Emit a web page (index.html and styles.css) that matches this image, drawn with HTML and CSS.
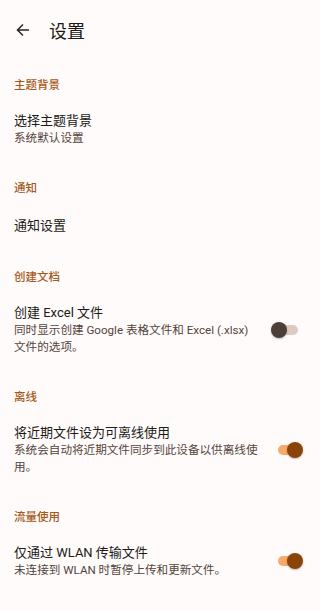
FILE: index.html
```html
<!DOCTYPE html>
<html lang="zh">
<head>
    <meta charset="UTF-8">
    <meta name="viewport" content="width=device-width, initial-scale=1.0">
    <title>设置</title>
    <link rel="stylesheet" href="styles.css">
</head>
<body>
    <div class="top-bar">
        <svg class="back-icon" width="16" height="16" viewBox="0 0 16 16">
            <path d="M14 8H2.5M8 2.5L2.5 8L8 13.5" fill="none" stroke="#2a2220" stroke-width="1.5"/>
        </svg>
        <span class="page-title">设置</span>
    </div>

    <div class="section-label">主题背景</div>
    <div class="item">
        <div class="item-text">
            <div class="item-title">选择主题背景</div>
            <div class="item-sub">系统默认设置</div>
        </div>
    </div>

    <div class="section-label">通知</div>
    <div class="item single">
        <div class="item-text">
            <div class="item-title">通知设置</div>
        </div>
    </div>

    <div class="section-label">创建文档</div>
    <div class="item">
        <div class="item-text">
            <div class="item-title">创建 Excel 文件</div>
            <div class="item-sub">同时显示创建 Google 表格文件和 Excel (.xlsx) 文件的选项。</div>
        </div>
        <div class="switch"><div class="switch-track"></div><div class="switch-thumb"></div></div>
    </div>

    <div class="section-label">离线</div>
    <div class="item">
        <div class="item-text">
            <div class="item-title">将近期文件设为可离线使用</div>
            <div class="item-sub">系统会自动将近期文件同步到此设备以供离线使用。</div>
        </div>
        <div class="switch on"><div class="switch-track"></div><div class="switch-thumb"></div></div>
    </div>

    <div class="section-label">流量使用</div>
    <div class="item">
        <div class="item-text">
            <div class="item-title">仅通过 WLAN 传输文件</div>
            <div class="item-sub">未连接到 WLAN 时暂停上传和更新文件。</div>
        </div>
        <div class="switch on"><div class="switch-track"></div><div class="switch-thumb"></div></div>
    </div>
</body>
</html>
```

FILE: styles.css
```css
body {
    margin: 0;
    background-color: #fffbfa;
    font-family: Roboto, "Noto Sans CJK SC", sans-serif;
    color: #201a17;
}
.top-bar {
    height: 61px;
    display: flex;
    align-items: center;
    padding-left: 15px;
    padding-bottom: 2px;
    box-sizing: border-box;
}
.back-icon {
    margin-right: 18px;
}
.page-title {
    font-size: 18px;
    color: #201a17;
}
.section-label {
    margin-top: 16px;
    padding: 0 14px 3px;
    font-size: 11.5px;
    line-height: 16px;
    font-weight: 500;
    color: #a65a1a;
}
.item {
    display: flex;
    align-items: center;
    padding: 16px 16px 16px 14px;
}
.item.single {
    min-height: 22px;
}
.item-text {
    flex: 1;
    padding-right: 10px;
}
.item-title {
    font-size: 13px;
    line-height: 18px;
}
.item-sub {
    font-size: 11.6px;
    line-height: 17.5px;
    color: #52443c;
}
.switch {
    position: relative;
    width: 34px;
    height: 18px;
    flex-shrink: 0;
}
.switch-track {
    position: absolute;
    left: 8px;
    top: 4px;
    width: 20px;
    height: 10px;
    border-radius: 5px;
    background-color: #dccac0;
}
.switch-thumb {
    position: absolute;
    left: 1px;
    top: 1px;
    width: 16px;
    height: 16px;
    border-radius: 50%;
    background-color: #4c3f38;
    box-shadow: 0 1px 2px rgba(0, 0, 0, 0.25);
}
.switch.on .switch-track {
    background-color: #f7aa6c;
}
.switch.on .switch-thumb {
    left: 17px;
    background-color: #8a4407;
}
```
